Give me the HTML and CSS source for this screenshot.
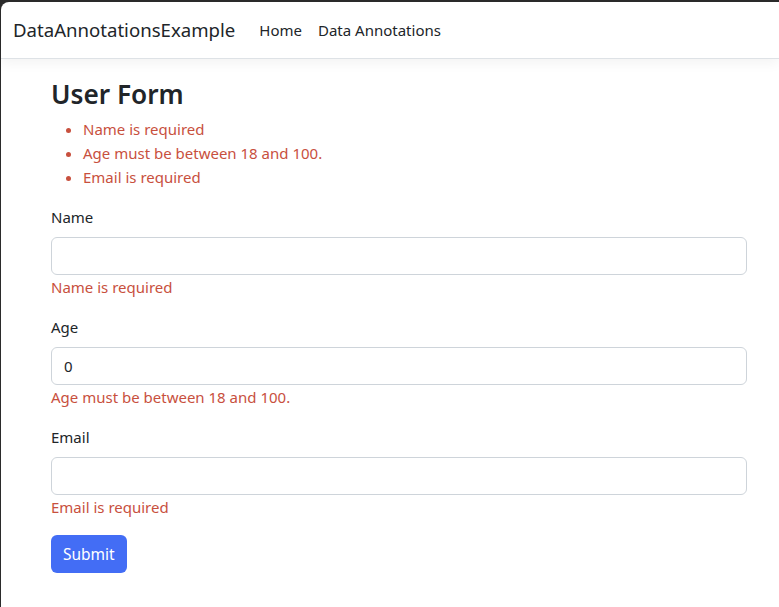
FILE: index.html
```html
<!DOCTYPE html>
<html lang="en">
<head>
<meta charset="utf-8">
<title>User Form - DataAnnotationsExample</title>
<link rel="stylesheet" href="styles.css">
</head>
<body>
<div class="window">
  <header class="navbar">
    <a class="brand" href="#">DataAnnotationsExample</a>
    <nav class="nav">
      <a class="nav-link" href="#">Home</a>
      <a class="nav-link" href="#">Data Annotations</a>
    </nav>
  </header>
  <main class="container">
    <h2 class="title">User Form</h2>
    <ul class="summary">
      <li>Name is required</li>
      <li>Age must be between 18 and 100.</li>
      <li>Email is required</li>
    </ul>
    <form class="form">
      <div class="group">
        <label class="label">Name</label>
        <input class="input" type="text" value="">
        <span class="error">Name is required</span>
      </div>
      <div class="group">
        <label class="label">Age</label>
        <input class="input" type="text" value="0">
        <span class="error">Age must be between 18 and 100.</span>
      </div>
      <div class="group">
        <label class="label">Email</label>
        <input class="input" type="text" value="">
        <span class="error">Email is required</span>
      </div>
      <button class="btn" type="button">Submit</button>
    </form>
  </main>
</div>
</body>
</html>
```

FILE: styles.css
```css
html, body {
  margin: 0;
  padding: 0;
  height: 100%;
}
body {
  background: #2b2b2b;
  font-family: "Noto Sans", "Open Sans", sans-serif;
  font-size: 15px;
  line-height: 24px;
  color: #212529;
  overflow: hidden;
}
.window {
  margin: 2px 0 0 1px;
  background: #fff;
  border-top-left-radius: 8px;
  min-height: calc(100% - 2px);
  box-sizing: border-box;
}
.navbar {
  display: flex;
  align-items: center;
  height: 56px;
  padding: 0 12px;
  border-bottom: 1px solid #dee2e6;
  box-shadow: 0 4px 12px rgba(0,0,0,0.05);
  box-sizing: content-box;
}
.brand {
  font-size: 18.6px;
  line-height: 30px;
  color: #212529;
  text-decoration: none;
  margin-right: 16px;
}
.nav {
  display: flex;
}
.nav-link {
  padding: 8px;
  color: #212529;
  text-decoration: none;
}
.container {
  width: 696px;
  margin: 16px 0 0 50px;
}
.title {
  margin: 0 0 6px;
  padding-top: 2px;
  font-size: 26.2px;
  line-height: 34px;
  font-weight: 600;
}
.summary {
  margin: 0 0 16px;
  padding-left: 32px;
  color: #c8503e;
}
.group {
  display: flex;
  flex-direction: column;
  margin-bottom: 16px;
}
.label {
  margin-bottom: 8px;
}
.input {
  height: 38px;
  box-sizing: border-box;
  padding: 6px 12px;
  border: 1px solid #ced4da;
  border-radius: 6px;
  font: inherit;
  color: #212529;
}
.error {
  color: #c8503e;
}
.btn {
  align-self: flex-start;
  height: 38px;
  padding: 6px 12px;
  border: none;
  border-radius: 6px;
  background: #436df5;
  color: #fff;
  font: inherit;
  font-size: 15.5px;
}
```
